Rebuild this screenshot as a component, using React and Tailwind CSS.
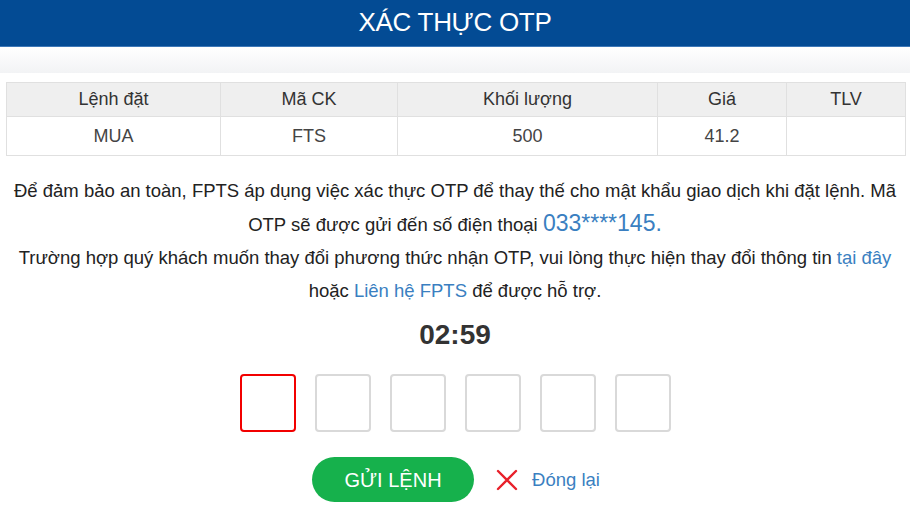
import React from 'react';

const columns = ['Lệnh đặt', 'Mã CK', 'Khối lượng', 'Giá', 'TLV'];
const row = ['MUA', 'FTS', '500', '41.2', ''];
const widths = ['w-[214px]', 'w-[177px]', 'w-[260px]', 'w-[129px]', 'flex-1'];

const App = () => {
    return (
        <div className="w-[910px] h-[509px] bg-white overflow-hidden font-['Liberation_Sans',Arial,sans-serif] text-[#333]">
            <div className="h-[47px] bg-[#034b94] border-b border-[#3d78b8] flex items-center justify-center">
                <h1 className="text-white text-[26px] leading-none tracking-[-0.3px] -mt-[2px]">XÁC THỰC OTP</h1>
            </div>
            <div className="h-[26px] bg-gradient-to-b from-white to-[#f2f3f5]" />

            <div className="px-[6px] pt-[9px]">
                <div className="border border-[#e0e0e0] w-[900px]">
                    <div className="flex h-[34px] bg-[#efefef] border-b border-[#e0e0e0]">
                        {columns.map((c, i) => (
                            <div
                                key={c}
                                className={`${widths[i]} flex items-center justify-center text-[18px] ${i < 4 ? 'border-r border-[#e0e0e0]' : ''}`}
                            >
                                {c}
                            </div>
                        ))}
                    </div>
                    <div className="flex h-[38px] bg-white">
                        {row.map((c, i) => (
                            <div
                                key={i}
                                className={`${widths[i]} flex items-center justify-center text-[18px] text-[#444] ${i < 4 ? 'border-r border-[#e0e0e0]' : ''}`}
                            >
                                {c}
                            </div>
                        ))}
                    </div>
                </div>
            </div>

            <div className="mt-[18px] px-[4px] text-center text-[18.5px] leading-[33px] text-[#222]">
                <p>
                    Để đảm bảo an toàn, FPTS áp dụng việc xác thực OTP để thay thế cho mật khẩu giao dịch khi đặt lệnh. Mã
                    <br />
                    OTP sẽ được gửi đến số điện thoại <span className="text-[23px] text-[#3a7fc1]">033****145.</span>
                </p>
                <p>
                    Trường hợp quý khách muốn thay đổi phương thức nhận OTP, vui lòng thực hiện thay đổi thông tin{' '}
                    <a className="text-[#3a7fc1]">tại đây</a>
                    <br />
                    hoặc <a className="text-[#3a7fc1]">Liên hệ FPTS</a> để được hỗ trợ.
                </p>
            </div>

            <div className="mt-[14px] text-center text-[28px] font-bold leading-none text-[#333]">02:59</div>

            <div className="mt-[25px] flex justify-center gap-[19px]">
                {[0, 1, 2, 3, 4, 5].map((i) => (
                    <div
                        key={i}
                        className={`w-[56px] h-[58px] rounded-[4px] border-2 ${i === 0 ? 'border-[#f20000]' : 'border-[#d9d9d9]'}`}
                    />
                ))}
            </div>

            <div className="mt-[25px] flex items-center justify-center gap-[22px] pl-[2px]">
                <button className="w-[162px] h-[45px] rounded-full bg-[#16b14c] text-white text-[20px]">GỬI LỆNH</button>
                <button className="flex items-center gap-[14px] text-[#3a7fc1] text-[18.5px]">
                    <svg width="22" height="22" viewBox="0 0 22 22" fill="none" stroke="#e8202a" strokeWidth="2.4" strokeLinecap="round">
                        <path d="M2 2L20 20M20 2L2 20" />
                    </svg>
                    Đóng lại
                </button>
            </div>
        </div>
    );
};

export default App;
